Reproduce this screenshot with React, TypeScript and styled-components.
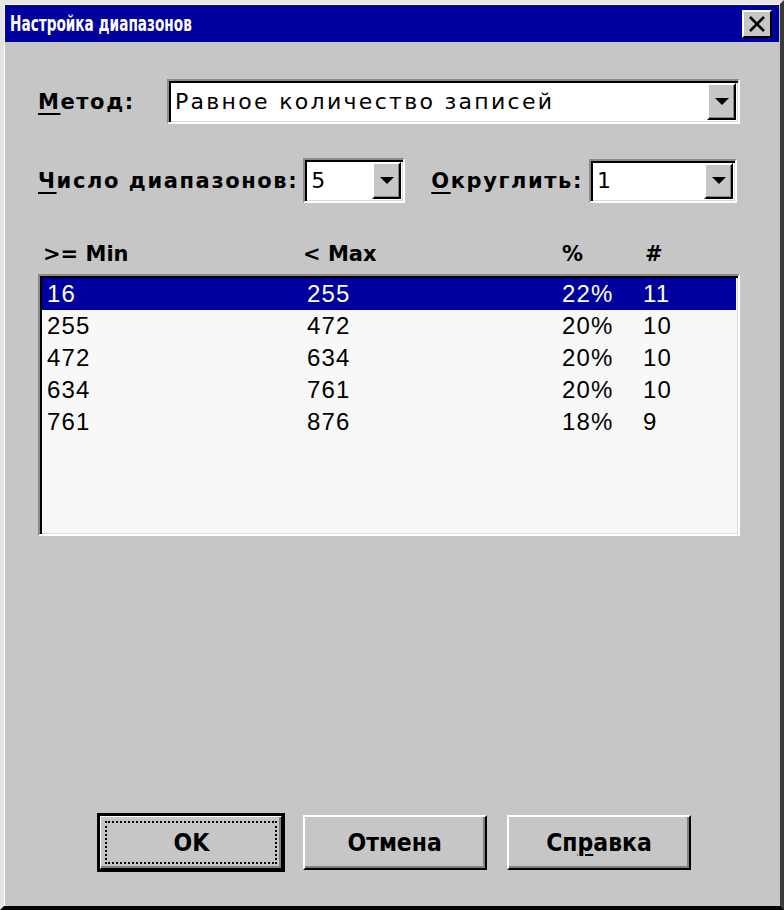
import styled, { createGlobalStyle } from 'styled-components';

const GlobalStyle = createGlobalStyle`
  html, body {
    margin: 0;
    padding: 0;
    background: #c6c6c6;
  }
`;

const Window = styled.div`
  width: 784px;
  height: 910px;
  box-sizing: border-box;
  background: #c6c6c6;
  border-style: solid;
  border-width: 4px;
  border-color: #e4e4e4 #3a3a3a #000 #e4e4e4;
  box-shadow: inset 1px 1px 0 #fff;
  display: flex;
  flex-direction: column;
  padding: 1px;
  font-family: 'Liberation Sans', 'DejaVu Sans', sans-serif;
  color: #000;
`;

const TitleBar = styled.div`
  height: 37px;
  background: #00009e;
  display: flex;
  align-items: center;
  justify-content: space-between;
  padding: 0 7px 0 5px;
`;

// the old window font is much narrower than anything installed
const Title = styled.span`
  display: inline-block;
  color: #fff;
  font-family: 'DejaVu Sans', sans-serif;
  font-weight: bold;
  font-size: 21px;
  transform: scaleX(0.65);
  transform-origin: left center;
`;

const CloseButton = styled.div`
  width: 30px;
  height: 28px;
  box-sizing: border-box;
  background: #c6c6c6;
  border: 2px solid;
  border-color: #fff #000 #000 #fff;
  display: flex;
  align-items: center;
  justify-content: center;
`;

const Body = styled.div`
  flex: 1;
  display: flex;
  flex-direction: column;
  padding: 37px 39px 35px 33px;
`;

const Row = styled.div<{ $top?: number }>`
  display: flex;
  align-items: center;
  margin-top: ${(p) => p.$top ?? 0}px;
`;

const Label = styled.label<{ $width?: number; $gap?: number; $left?: number }>`
  font-family: 'DejaVu Sans', sans-serif;
  font-weight: bold;
  font-size: 21px;
  letter-spacing: 1.6px;
  white-space: nowrap;
  width: ${(p) => (p.$width ? `${p.$width}px` : 'auto')};
  margin-right: ${(p) => p.$gap ?? 0}px;
  margin-left: ${(p) => p.$left ?? 0}px;
  u {
    text-decoration-thickness: 2px;
    text-underline-offset: 4px;
  }
`;

const Combo = styled.div<{ $width?: number; $height: number }>`
  box-sizing: border-box;
  height: ${(p) => p.$height}px;
  width: ${(p) => (p.$width ? `${p.$width}px` : 'auto')};
  flex: ${(p) => (p.$width ? '0 0 auto' : '1')};
  border: 2px solid;
  border-color: #8a8a8a #fff #fff #8a8a8a;
  box-shadow: inset 2px 2px 0 #000, inset -1px -1px 0 #dcdcdc;
  background: #fff;
  display: flex;
  align-items: stretch;
  padding: 2px;
`;

const ComboText = styled.span`
  flex: 1;
  display: flex;
  align-items: center;
  padding-left: 4px;
  font-family: 'DejaVu Sans', sans-serif;
  font-size: 22px;
  letter-spacing: 2.3px;
`;

const DropButton = styled.div`
  width: 29px;
  box-sizing: border-box;
  background: #c6c6c6;
  border: 2px solid;
  border-color: #fff #000 #000 #fff;
  box-shadow: inset -1px -1px 0 #868686;
  display: flex;
  align-items: center;
  justify-content: center;
`;

const Arrow = styled.div`
  width: 0;
  height: 0;
  border-left: 7px solid transparent;
  border-right: 7px solid transparent;
  border-top: 7px solid #000;
`;

const HeaderGrid = styled.div`
  display: grid;
  grid-template-columns: 260px 259px 83px 1fr;
  margin-top: 35px;
  padding-left: 5px;
  height: 32px;
  align-items: center;
  font-family: 'DejaVu Sans', sans-serif;
  font-weight: bold;
  font-size: 21px;
`;

const ListBox = styled.div`
  margin-top: 4px;
  height: 262px;
  box-sizing: border-box;
  border: 2px solid;
  border-color: #8a8a8a #fff #fff #8a8a8a;
  box-shadow: inset 2px 2px 0 #000, inset -1px -1px 0 #dcdcdc;
  background: #f8f8f8;
  padding: 2px;
`;

const ListRow = styled.div<{ $selected?: boolean }>`
  display: grid;
  grid-template-columns: 260px 255px 81px 1fr;
  height: 32px;
  align-items: center;
  padding-left: 5px;
  background: ${(p) => (p.$selected ? '#00009e' : 'transparent')};
  color: ${(p) => (p.$selected ? '#fff' : '#000')};
  font-family: 'Liberation Sans', sans-serif;
  font-size: 24px;
  letter-spacing: 1.2px;
`;

const Buttons = styled.div`
  margin-top: auto;
  display: flex;
  gap: 20px;
  padding-left: 61px;
`;

const Button = styled.div<{ $default?: boolean }>`
  width: 184px;
  height: 55px;
  box-sizing: border-box;
  border: 2px solid;
  border-color: #fff #000 #000 #fff;
  box-shadow: inset -2px -2px 0 #808080;
  outline: ${(p) => (p.$default ? '3px solid #000' : 'none')};
  outline-offset: -1px;
  display: flex;
  align-items: center;
  justify-content: center;
  padding: 4px;
`;

const Focus = styled.div<{ $on?: boolean }>`
  width: 100%;
  height: 100%;
  box-sizing: border-box;
  border: 2px dotted ${(p) => (p.$on ? '#000' : 'transparent')};
  display: flex;
  align-items: center;
  justify-content: center;
  font-family: 'DejaVu Sans', sans-serif;
  font-weight: bold;
  font-size: 25px;
  u {
    text-decoration-thickness: 2px;
    text-underline-offset: 3px;
  }
`;

const ButtonText = styled.span`
  display: inline-block;
  transform: scaleX(0.88);
`;

const rows = [
  ['16', '255', '22%', '11'],
  ['255', '472', '20%', '10'],
  ['472', '634', '20%', '10'],
  ['634', '761', '20%', '10'],
  ['761', '876', '18%', '9'],
];

const Dropdown = ({ value, width, height }: { value: string; width?: number; height: number }) => (
  <Combo $width={width} $height={height}>
    <ComboText>{value}</ComboText>
    <DropButton>
      <Arrow />
    </DropButton>
  </Combo>
);

export default function App() {
  return (
    <>
      <GlobalStyle />
      <Window>
        <TitleBar>
          <Title>Настройка диапазонов</Title>
          <CloseButton>
            <svg width="18" height="16" viewBox="0 0 18 16">
              <path d="M2 1 L16 15 M16 1 L2 15" stroke="#000" strokeWidth="2.6" />
            </svg>
          </CloseButton>
        </TitleBar>
        <Body>
          <Row>
            <Label $width={129}>
              <u>М</u>етод:
            </Label>
            <Dropdown value="Равное количество записей" height={45} />
          </Row>
          <Row $top={34}>
            <Label $gap={5}>
              <u>Ч</u>исло диапазонов:
            </Label>
            <Dropdown value="5" width={102} height={45} />
            <Label $left={26} $gap={6}>
              <u>О</u>круглить:
            </Label>
            <Dropdown value="1" width={148} height={44} />
          </Row>
          <HeaderGrid>
            <span>&gt;= Min</span>
            <span>&lt; Max</span>
            <span>%</span>
            <span>#</span>
          </HeaderGrid>
          <ListBox>
            {rows.map((r, i) => (
              <ListRow key={i} $selected={i === 0}>
                {r.map((c, j) => (
                  <span key={j}>{c}</span>
                ))}
              </ListRow>
            ))}
          </ListBox>
          <Buttons>
            <Button $default>
              <Focus $on>
                <ButtonText>OK</ButtonText>
              </Focus>
            </Button>
            <Button>
              <Focus>
                <ButtonText>Отмена</ButtonText>
              </Focus>
            </Button>
            <Button>
              <Focus>
                <ButtonText>
                  Сп<u>р</u>авка
                </ButtonText>
              </Focus>
            </Button>
          </Buttons>
        </Body>
      </Window>
    </>
  );
}
